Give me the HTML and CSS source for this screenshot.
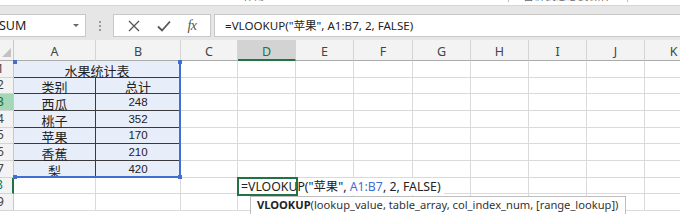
FILE: index.html
```html
<!DOCTYPE html>
<html>
<head>
<meta charset="utf-8">
<link rel="stylesheet" href="styles.css">
</head>
<body>
<div class="title"><span class="t1">工作簿1</span><span class="t2">告诉我您想要做什么</span></div>
<div class="toolbar">
  <div class="namebox"><span class="nb-text">SUM</span><span class="caret"></span></div>
  <div class="grip"><i></i><i></i><i></i></div>
  <div class="fbtns">
    <svg class="ico" width="14" height="14" viewBox="0 0 14 14"><path d="M2 2 L12 12 M12 2 L2 12" stroke="#555" stroke-width="1.3" fill="none"/></svg>
    <svg class="ico" width="16" height="14" viewBox="0 0 16 14"><path d="M2 7.5 L6 11.5 L14 2.5" stroke="#555" stroke-width="1.8" fill="none"/></svg>
    <span class="fx">fx</span>
  </div>
  <div class="fbox">=VLOOKUP("苹果", A1:B7, 2, FALSE)</div>
</div>
<div class="sheet">
  <div class="grid">
    <div class="corner"><span class="tri"></span></div>
    <div class="ch">A</div><div class="ch">B</div><div class="ch">C</div><div class="ch sel">D</div><div class="ch">E</div><div class="ch">F</div><div class="ch">G</div><div class="ch">H</div><div class="ch">I</div><div class="ch">J</div><div class="ch">K</div>

    <div class="rh">1</div><div class="c t tt">水果统计表</div><div class="c"></div><div class="c"></div><div class="c"></div><div class="c"></div><div class="c"></div><div class="c"></div><div class="c"></div><div class="c"></div><div class="c"></div>

    <div class="rh">2</div><div class="c t ta">类别</div><div class="c t">总计</div><div class="c"></div><div class="c"></div><div class="c"></div><div class="c"></div><div class="c"></div><div class="c"></div><div class="c"></div><div class="c"></div><div class="c"></div>

    <div class="rh hl">3</div><div class="c t ta">西瓜</div><div class="c t num">248</div><div class="c"></div><div class="c"></div><div class="c"></div><div class="c"></div><div class="c"></div><div class="c"></div><div class="c"></div><div class="c"></div><div class="c"></div>

    <div class="rh">4</div><div class="c t ta">桃子</div><div class="c t num">352</div><div class="c"></div><div class="c"></div><div class="c"></div><div class="c"></div><div class="c"></div><div class="c"></div><div class="c"></div><div class="c"></div><div class="c"></div>

    <div class="rh">5</div><div class="c t ta">苹果</div><div class="c t num">170</div><div class="c"></div><div class="c"></div><div class="c"></div><div class="c"></div><div class="c"></div><div class="c"></div><div class="c"></div><div class="c"></div><div class="c"></div>

    <div class="rh">6</div><div class="c t ta">香蕉</div><div class="c t num">210</div><div class="c"></div><div class="c"></div><div class="c"></div><div class="c"></div><div class="c"></div><div class="c"></div><div class="c"></div><div class="c"></div><div class="c"></div>

    <div class="rh">7</div><div class="c t ta">梨</div><div class="c t num">420</div><div class="c"></div><div class="c"></div><div class="c"></div><div class="c"></div><div class="c"></div><div class="c"></div><div class="c"></div><div class="c"></div><div class="c"></div>

    <div class="rh act">8</div><div class="c"></div><div class="c"></div><div class="c"></div><div class="c"></div><div class="c"></div><div class="c"></div><div class="c"></div><div class="c"></div><div class="c"></div><div class="c"></div><div class="c"></div>

    <div class="rh">9</div><div class="c"></div><div class="c"></div><div class="c"></div><div class="c"></div><div class="c"></div><div class="c"></div><div class="c"></div><div class="c"></div><div class="c"></div><div class="c"></div><div class="c"></div>
  </div>

  <div class="range">
    <span class="h h-tl"></span><span class="h h-tr"></span><span class="h h-bl"></span><span class="h h-br"></span>
  </div>
  <div class="editor">=VLOOKUP("苹果", <span class="ref">A1:B7</span>, 2, FALSE)</div>
  <div class="editbox"></div>
  <div class="tip"><b>VLOOKUP</b>(lookup_value, table_array, col_index_num, [range_lookup])</div>
</div>
</body>
</html>
```
FILE: styles.css
```css
* { box-sizing: border-box; }
html, body { margin: 0; padding: 0; }
body {
  width: 680px;
  height: 214px;
  overflow: hidden;
  background: #ffffff;
  font-family: "Noto Sans", "Noto Sans CJK SC", sans-serif;
  color: #222;
}

.title {
  height: 6px;
  overflow: hidden;
  background: #fff;
  border-bottom: 1px solid #d6d6d6;
  display: flex;
  align-items: flex-start;
  font-size: 11px;
  line-height: 12px;
  color: #666;
}
.title span { margin-top: -10px; white-space: nowrap; overflow: hidden; }
.t1 { margin-left: 232px; width: 276px; }
.t2 { width: 120px; padding: 0 14px; border-left: 1px solid #bbb; border-right: 1px solid #bbb; }

.toolbar {
  height: 34px;
  background: #e6e6e6;
  display: flex;
  align-items: flex-start;
  padding-top: 8px;
}
.namebox {
  width: 86px;
  height: 23px;
  background: #fff;
  border: 1px solid #c8c8c8;
  border-left: none;
  display: flex;
  align-items: center;
  justify-content: space-between;
  padding-right: 6px;
  font-size: 12.5px;
  color: #222;
}
.nb-text { margin-left: -1px; }
.caret {
  width: 0; height: 0;
  border-left: 3px solid transparent;
  border-right: 3px solid transparent;
  border-top: 3px solid #666;
}
.grip {
  width: 27px;
  height: 23px;
  display: flex;
  flex-direction: column;
  align-items: center;
  justify-content: center;
  gap: 2px;
}
.grip i { width: 2px; height: 2px; background: #9a9a9a; display: block; }
.fbtns {
  width: 98px;
  height: 23px;
  background: #fff;
  border: 1px solid #c8c8c8;
  display: flex;
  align-items: center;
  justify-content: space-around;
  padding: 0 6px;
}
.fx {
  font-family: "Liberation Serif", "DejaVu Serif", serif;
  font-style: italic;
  font-size: 14px;
  color: #555;
  letter-spacing: -0.5px;
}
.fbox {
  margin-left: 3px;
  flex: 1;
  height: 23px;
  background: #fff;
  border: 1px solid #c8c8c8;
  border-right: none;
  padding-left: 10px;
  font-size: 11.6px;
  line-height: 21px;
  color: #222;
  white-space: nowrap;
}

.sheet { position: relative; }
.grid {
  display: grid;
  grid-template-columns: 14px 82px 85px 57px 58px 58px 59px 58px 58px 58px 58px 58px;
  grid-template-rows: 21px 17px 16px 17px 17px 16px 17px 17px 16px 17px;
  width: 722px;
}
.corner {
  background: #f3f3f3;
  border-right: 1px solid #c9c9c9;
  border-bottom: 1px solid #ababab;
  position: relative;
}
.tri {
  position: absolute;
  right: 2px; bottom: 3px;
  width: 0; height: 0;
  border-left: 9px solid transparent;
  border-bottom: 9px solid #c2c2c2;
}
.ch {
  background: #f3f3f3;
  border-right: 1px solid #d4d4d4;
  border-bottom: 1px solid #ababab;
  display: flex;
  align-items: center;
  justify-content: center;
  font-size: 12.5px;
  color: #444;
  padding-top: 3px;
}
.ch.sel {
  background: #d3d3d3;
  color: #217346;
  border-bottom: 2px solid #217346;
  padding-top: 4px;
}
.rh {
  background: #f3f3f3;
  border-right: 1px solid #c9c9c9;
  border-bottom: 1px solid #d4d4d4;
  display: flex;
  align-items: flex-end;
  justify-content: flex-end;
  padding-right: 9px;
  padding-bottom: 2px;
  font-size: 12.5px;
  line-height: 12px;
  color: #444;
  white-space: nowrap;
}
.rh.hl { background: #a3d7b6; color: #1e6b41; }
.rh.act { color: #217346; border-right: 2px solid #217346; }

.c {
  border-right: 1px solid #dadada;
  border-bottom: 1px solid #dadada;
  display: flex;
  align-items: flex-end;
  justify-content: center;
  font-size: 13px;
  line-height: 11px;
  padding-bottom: 1px;
  color: #222;
  font-family: "Noto Sans CJK SC", sans-serif;
}
.c.t { background: #e8eef9; border-bottom: 1px solid #3a3a3a; }
.c.ta { border-right: 1px solid #3a3a3a; }
.c.tt { grid-column: span 2; }
.c.num { font-family: "Liberation Sans", "Noto Sans CJK SC", sans-serif; font-size: 11.5px; padding-bottom: 2px; }

.range {
  position: absolute;
  left: 14px;
  top: 21px;
  width: 167px;
  height: 117px;
  border-right: 2px solid #3f6fd0;
  border-bottom: 2px solid #3f6fd0;
  pointer-events: none;
}
.h { position: absolute; width: 4px; height: 4px; background: #3f6fd0; }
.h-tl { left: -1px; top: -1px; }
.h-tr { right: -3px; top: -1px; }
.h-bl { left: -1px; bottom: -3px; }
.h-br { right: -3px; bottom: -3px; }

.editor {
  position: absolute;
  left: 239px;
  top: 138px;
  height: 17px;
  padding: 0 3px 0 2px;
  background: #fff;
  font-size: 12.3px;
  line-height: 17px;
  white-space: nowrap;
  color: #222;
}
.ref { color: #3f6fd0; }
.editbox {
  position: absolute;
  left: 237px;
  top: 137px;
  width: 61px;
  height: 19px;
  border: 2px solid #217346;
}
.tip {
  position: absolute;
  left: 250px;
  top: 156px;
  width: 376px;
  height: 22px;
  background: #fff;
  border: 1px solid #bdbdbd;
  padding-left: 6px;
  font-size: 11.15px;
  line-height: 15px;
  color: #333;
  white-space: nowrap;
}
.tip b { font-weight: bold; color: #222; }
```
